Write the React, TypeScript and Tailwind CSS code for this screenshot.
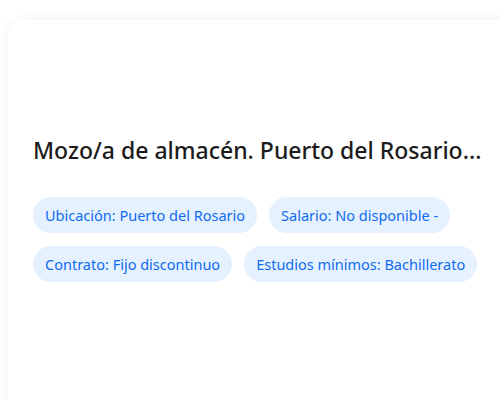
const tags = [
  "Ubicación: Puerto del Rosario",
  "Salario: No disponible -",
  "Contrato: Fijo discontinuo",
  "Estudios mínimos: Bachillerato",
];

export default function App() {
  return (
    <div
      className="h-[400px] w-[500px] overflow-hidden bg-white pl-2 pt-5"
      style={{ fontFamily: '"Noto Sans", sans-serif' }}
    >
      <div className="h-[420px] w-[520px] rounded-2xl bg-white px-[25px] pt-[115px] shadow-[0_0_12px_rgba(0,0,0,0.06)]">
        <h1 className="text-[23px] font-medium leading-[30px] text-[#1b1b1b]">
          Mozo/a de almacén. Puerto del Rosario...
        </h1>
        <div className="mt-[32px] flex w-[460px] flex-wrap gap-x-3 gap-y-[13px]">
          {tags.map(t => (
            <span
              key={t}
              className="rounded-full bg-[#e6f1ff] px-3 py-[8px] text-[14.5px] leading-5 text-[#0f6cf0]"
            >
              {t}
            </span>
          ))}
        </div>
      </div>
    </div>
  );
}
